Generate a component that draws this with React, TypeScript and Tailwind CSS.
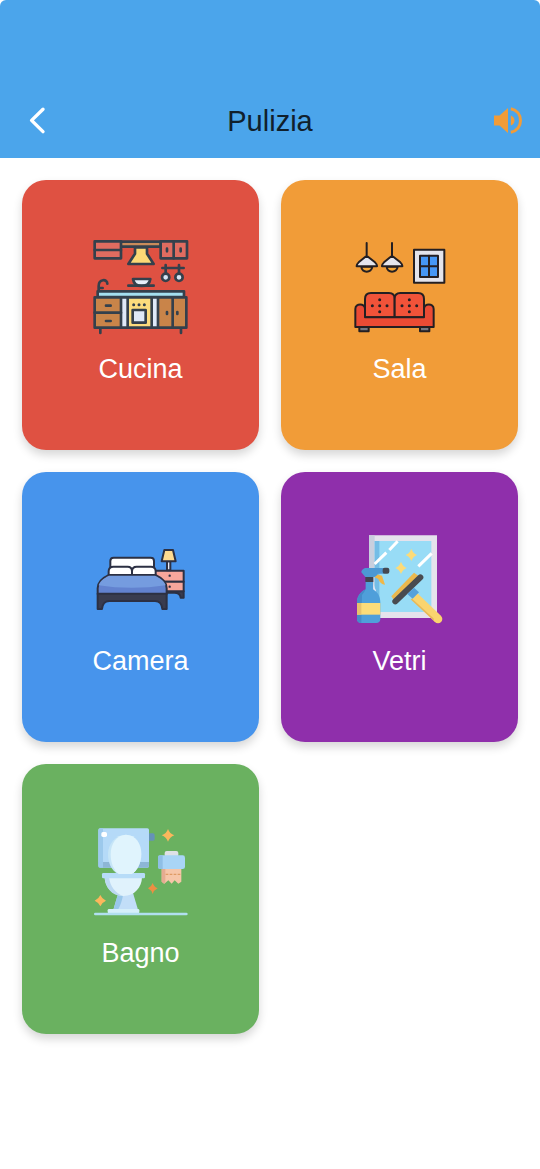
import type { ReactNode } from "react";

function KitchenIcon() {
  return (
    <svg className="size-[110px]" viewBox="2 0 330 330" fill="none" stroke="#34404c" strokeWidth={8} strokeLinejoin="round" strokeLinecap="round" aria-hidden="true">
      {/* wall units and hood */}
      <rect x="106" y="35" width="120" height="15" fill="#c98b5a" />
      <rect x="28" y="34" width="79" height="51" fill="#e06c60" />
      <path d="M28 60h79" />
      <path d="M149 52h36v19l20 31h-76l20-31z" fill="#fdd976" />
      <rect x="226" y="34" width="79" height="51" fill="#e06c60" />
      <path d="M265 34v51M245 56v8M286 56v8" />
      {/* hanging pans */}
      <path d="M231 114h64M241 105v24M281 105v24" />
      <circle cx="241" cy="142" r="11" fill="#d6e5f5" />
      <circle cx="281" cy="142" r="11" fill="#d6e5f5" />
      {/* bowl and tap */}
      <path d="M143 147h52c-2 14-11 21-26 21s-24-7-26-21z" fill="#e7effa" />
      <path d="M129 167h76" />
      <path d="M40 183v-16M40 168c0-22 26-22 26-7M40 174h12" />
      {/* base units */}
      <rect x="37" y="184" width="259" height="17" fill="#a4dff0" />
      <rect x="28" y="202" width="275" height="91" fill="#c98449" />
      <rect x="107" y="202" width="111" height="91" fill="#dfe9f8" />
      <path d="M28 248h79M62 227h14M62 273h14" />
      <rect x="127" y="202" width="72" height="91" fill="#fddc7d" />
      <rect x="142" y="240" width="39" height="38" fill="#dfe9f8" />
      <path d="M145 224h.1M161 224h.1M177 224h.1" strokeWidth={9} />
      <path d="M262 202v91M245 246v6M276 246v6M45 296v13M287 296v13" />
    </svg>
  );
}

function LivingRoomIcon() {
  return (
    <svg className="size-[110px]" viewBox="0 -15 330 330" fill="none" stroke="#241f22" strokeWidth={6} strokeLinejoin="round" strokeLinecap="round" aria-hidden="true">
      {/* lamps */}
      <path d="M49 95c1 20 31 20 33 0z" fill="#f5a735" />
      <path d="M65 24v38M65 62l-24 20c-4 4-7 7-6 12h61c1-5-2-8-6-12z" fill="#e4e5ed" />
      <path d="M125 95c1 20 31 20 33 0z" fill="#f5a735" />
      <path d="M141 24v38M141 62l-24 20c-4 4-7 7-6 12h61c1-5-2-8-6-12z" fill="#e4e5ed" />
      {/* window */}
      <rect x="207" y="44" width="91" height="99" fill="#e4e4eb" />
      <rect x="225" y="62" width="54" height="64" fill="#4697f5" />
      <path d="M252 62v64M225 94h54" />
      {/* sofa */}
      <rect x="43" y="276" width="28" height="13" fill="#747782" />
      <rect x="225" y="276" width="28" height="13" fill="#747782" />
      <path d="M60 247v-55c0-12 7-18 18-18h54c11 0 17 6 17 17v56z" fill="#f15339" />
      <path d="M149 247v-56c0-11 6-17 17-17h53c12 0 18 6 18 18v55z" fill="#f15339" />
      <path d="M31 276v-54c0-18 29-18 29 0v25h177v-25c0-18 29-18 29 0v54z" fill="#eb4b34" />
      <path d="M104 194h.1M82 212h.1M104 212h.1M126 212h.1M104 230h.1M193 194h.1M171 212h.1M193 212h.1M215 212h.1M193 230h.1" strokeWidth={9} />
    </svg>
  );
}

function BedroomIcon() {
  return (
    <svg className="size-[110px]" viewBox="2 -54 330 330" fill="none" stroke="#2c3043" strokeWidth={6} strokeLinejoin="round" strokeLinecap="round" aria-hidden="true">
      {/* bedside table and lamp */}
      <path d="M200 154h95v19h-9c-1-10-7-15-19-15h-67z" fill="#393c4f" />
      <rect x="200" y="92" width="95" height="33" fill="#f7a69b" />
      <rect x="200" y="125" width="95" height="29" fill="#f7a69b" />
      <path d="M202 94l38 42v18h-20z" fill="#cf7c83" stroke="none" />
      <path d="M253 107h.1M253 140h.1" strokeWidth={7} />
      <path d="M245 64h10v27h-10z" fill="#e8ecf7" />
      <path d="M237 30h26l8 34h-42z" fill="#fddb91" />
      {/* bed */}
      <path d="M75 102V63c0-7 3-10 10-10h111c7 0 10 3 10 10v39z" fill="#fff" />
      <path d="M70 106V94c0-9 6-14 14-14h43c8 0 13 5 13 14v12z" fill="#fff" />
      <path d="M140 106V94c0-9 6-14 14-14h43c8 0 14 5 14 14v12z" fill="#fff" />
      <path d="M71 105h139c22 10 34 23 34 40v17H37v-17c0-17 12-30 34-40z" fill="#6282cf" />
      <path d="M71 107h138c18 9 29 17 32 29-65 10-139 10-201 0 3-12 13-20 31-29z" fill="#759cdf" stroke="none" />
      <path d="M37 161h207v46h-13c-2-16-7-24-22-24H72c-15 0-20 8-22 24H37z" fill="#393c4f" />
    </svg>
  );
}

function WindowsIcon() {
  return (
    <svg className="size-[110px]" viewBox="0 -9 330 330" fill="none" aria-hidden="true">
      {/* window */}
      <path fill="#e5e2ec" d="M72 31h204v248H72z" />
      <path fill="#c9cfde" d="M72 31h17v248H72z" />
      <path fill="#98dcf6" d="M89 48h170v213H89z" />
      <path fill="#74bde6" d="M89 48h14v213H89z" />
      <path d="M89 117l35-34M133 75l25-26M220 124l40-39" stroke="#fff" strokeWidth={9} />
      <path d="M199 71q5 14 17 19-12 5-17 18-5-13-17-18 12-5 17-19zM168 110q5 14 17 19-12 5-17 18-5-13-17-18 12-5 17-19z" fill="#fcdb78" />
      {/* spray bottle */}
      <path d="M89 146l22 6 9 27q-15-1-20-17l-11-5z" fill="#f0b747" />
      <path d="M85 154q-1 29 8 42l-7 20z" fill="#e3eafa" />
      <path d="M62 169h22v24c14 9 22 20 22 39v51c0 7-5 11-12 11H49c-8 0-13-4-13-11v-51c0-18 10-31 26-39z" fill="#4f9fda" />
      <path d="M63 174q2 21-12 36l-2 84q-13 0-13-11v-51c0-18 10-31 26-39z" fill="#458bc9" />
      <path d="M36 234h70v35H36z" fill="#fcdc79" />
      <path d="M36 234h13v35H36z" fill="#e8c16c" />
      <path d="M61 153h24v18H61z" fill="#43444f" />
      <path d="M60 129h58v17h-19q-6 10-15 10H61l-12-14q-1-7 11-13z" fill="#4c98d3" />
      <rect x="113" y="128" width="20" height="18" rx="6" fill="#454750" />
      {/* squeegee */}
      <path d="M139 214l68-71 14 10-71 77z" fill="#eab84e" />
      <path d="M151 229l75-72" stroke="#494b50" strokeWidth={18} strokeLinecap="round" />
      <path d="M208 214l70 67" stroke="#fad46f" strokeWidth={26} />
      <path d="M199 222l72 66" stroke="#e6b859" strokeWidth={5} />
      <circle cx="279" cy="282" r="13" fill="#fad46f" />
      <path d="M187 207l20-19 15 14-19 19z" fill="#55a1dc" />
    </svg>
  );
}

function BathroomIcon() {
  return (
    <svg className="size-[110px]" viewBox="2 -18 330 330" fill="none" aria-hidden="true">
      {/* cistern */}
      <rect x="188" y="40" width="20" height="22" rx="5" fill="#6592b8" />
      <rect x="39" y="25" width="152" height="118" rx="5" fill="#b5daf8" />
      <path d="M39 126h152v12q0 5-5 5H44q-5 0-5-5z" fill="#8db6d6" />
      <path d="M39 33v103q0 6 6 7h8V25h-6q-8 0-8 8z" fill="#9cc9ec" />
      <rect x="48" y="36" width="17" height="15" rx="5" fill="#fff" />
      {/* lid, seat and bowl */}
      <path d="M99 219h44l15 50H84z" fill="#c2def8" />
      <path d="M99 219h15q-4 30-16 50H84z" fill="#99c7ea" />
      <path d="M121 44c29 0 47 27 47 58 0 28-13 50-28 60H97c-19-12-29-33-29-60 0-31 23-58 53-58z" fill="#c6e5f7" />
      <path d="M122 44c29 0 46 27 46 58 0 28-13 50-28 60h-38c-18-12-26-33-26-60 0-31 18-58 46-58z" fill="#e0f4fd" />
      <path d="M58 171h112c0 30-23 57-55 57s-57-27-57-57z" fill="#e0f2fc" />
      <path d="M58 171h13c3 29 20 49 42 57-32 1-55-26-55-57z" fill="#bcd9f2" />
      <rect x="50" y="159" width="129" height="16" rx="4" fill="#b7dcf8" />
      <path d="M87 151h66l-13 11h-40z" fill="#e0f4fd" />
      <rect x="67" y="267" width="95" height="13" rx="4" fill="#d5effa" />
      <path d="M30 282h273" stroke="#b1dff0" strokeWidth={8} strokeLinecap="round" />
      {/* paper roll */}
      <rect x="238" y="93" width="41" height="18" rx="6" fill="#dfe1e6" />
      <path d="M229 144h59v41l-9 6-11-10-9 10-10-10-12 10-8-6z" fill="#f6c6a8" />
      <path d="M229 144h11v44l-4 3-7-6z" fill="#e5ac91" />
      <path d="M241 163h45" stroke="#df9b64" strokeWidth={4} strokeDasharray="8 4" />
      <rect x="218" y="106" width="81" height="41" rx="7" fill="#a9d5f6" />
      <path d="M225 106h7v41h-7q-7 0-7-7v-27q0-7 7-7z" fill="#8fbfe5" />
      {/* sparkles */}
      <path d="M248 27q5 14 19 19-14 5-19 19-5-14-19-19 14-5 19-19zM45 225q5 12 17 17-12 5-17 17-5-12-17-17 12-5 17-17z" fill="#fcb75c" />
      <path d="M202 189q4 12 15 16-11 5-15 17-4-12-14-17 10-4 14-16z" fill="#ed8f43" />
    </svg>
  );
}

function RoomCard({ label, color, children }: { label: string; color: string; children: ReactNode }) {
  return (
    <button
      type="button"
      className={`flex aspect-[237/270] flex-col items-center justify-start gap-3 rounded-3xl pt-[50px] text-white shadow-[0_5px_10px_rgba(0,0,0,0.16)] ${color}`}
    >
      {children}
      <span className="text-[27px] leading-[34px]">{label}</span>
    </button>
  );
}

export default function App() {
  return (
    <div className="min-h-screen bg-white font-['Liberation_Sans',Arial,sans-serif]">
      <header className="rounded-t-md bg-[#4ba5eb] pt-[84px]">
        <div className="grid grid-cols-[1fr_auto_1fr] items-center px-4 pb-4">
          <button type="button" aria-label="Indietro" className="flex h-[58px] w-11 items-center justify-center pt-4">
            <svg className="h-8 w-6" viewBox="0 0 24 32" fill="none" stroke="#fff" strokeWidth="3.4" strokeLinecap="round" strokeLinejoin="round" aria-hidden="true">
              <path d="M17 4.200 5.600 15.400 17 26.600" />
            </svg>
          </button>
          <h1 className="pt-4 text-[29px] leading-10 text-[#10202c]">Pulizia</h1>
          <button type="button" aria-label="Ascolta" className="flex h-[58px] items-center justify-self-end pt-4">
            <svg className="h-8 w-8" viewBox="0 0 32 32" fill="none" aria-hidden="true">
              <path d="M2 10.500h5.500l8.500-7.500v25l-8.500-7.500H2z" fill="#f19c38" />
              <path d="M18.800 10.500v10q3.700-1.500 3.700-5t-3.700-5z" fill="#f19c38" />
              <path d="M18.800 3.700C25 5 28.500 9.800 28.500 15.500S25 26 18.800 27.300" stroke="#f19c38" strokeWidth="3" />
            </svg>
          </button>
        </div>
      </header>
      <main className="grid grid-cols-2 gap-[22px] p-[22px]">
        <RoomCard label="Cucina" color="bg-[#df5142]">
          <KitchenIcon />
        </RoomCard>
        <RoomCard label="Sala" color="bg-[#f19c38]">
          <LivingRoomIcon />
        </RoomCard>
        <RoomCard label="Camera" color="bg-[#4794ec]">
          <BedroomIcon />
        </RoomCard>
        <RoomCard label="Vetri" color="bg-[#8f2fab]">
          <WindowsIcon />
        </RoomCard>
        <RoomCard label="Bagno" color="bg-[#6ab160]">
          <BathroomIcon />
        </RoomCard>
      </main>
    </div>
  );
}
